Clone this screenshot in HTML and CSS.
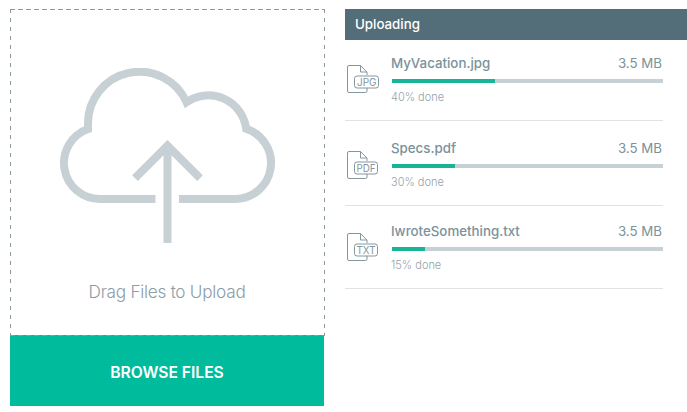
FILE: index.html
```
<!DOCTYPE html>
<html lang="en">
<head>
<meta charset="utf-8">
<title>Upload files</title>
<link rel="stylesheet" href="styles.css">
</head>
<body>
<main class="uploader">
  <section class="picker">
    <div class="dropzone">
      <svg class="frame" width="315" height="327" viewBox="0 0 315 327" fill="none" stroke="#8b999f">
        <path d="M0 .5H315" stroke-dasharray="5 3"/>
        <path d="M.5 0V327M314.5 0V327" stroke-dasharray="4 5"/>
      </svg>
      <svg class="cloud" width="215" height="175" viewBox="60 68 215 175" fill="none" stroke="#c7d0d4" stroke-width="8">
        <path d="M155.5 199H100A36 36 0 0 1 88 129.060V123.5A51.5 51.5 0 0 1 186.5 102.2A38.2 38.2 0 0 1 246.2 128.780A36 36 0 0 1 235 199H179"/>
        <path d="M135 178.2L167.5 145.7L200 178.2M167.500 145V243"/>
      </svg>
      <p class="hint">Drag Files to Upload</p>
    </div>
    <button class="browse" type="button">BROWSE FILES</button>
  </section>
  <section class="queue">
    <h2 class="heading">Uploading</h2>
    <article class="item first">
      <svg class="file" width="34" height="30" viewBox="0 0 34 30">
        <path d="M22 11V8L15.500 1.500H4Q2.500 1.500 2.500 3V27Q2.500 28.500 4 28.500H20.500Q22 28.500 22 27V24M15.500 1.500V8H22"/>
        <rect x="9.500" y="12" width="24" height="12" rx="2.500"/>
        <text x="12" y="21.700" textLength="19.500" lengthAdjust="spacingAndGlyphs">JPG</text>
      </svg>
      <div class="details">
        <div class="line"><span class="name">MyVacation.jpg</span><span class="size">3.5 MB</span></div>
        <div class="track"><div class="bar" style="width:38%"></div></div>
        <div class="status">40% done</div>
      </div>
    </article>
    <article class="item second">
      <svg class="file" width="34" height="30" viewBox="0 0 34 30">
        <path d="M22 11V8L15.500 1.500H4Q2.500 1.500 2.500 3V27Q2.500 28.500 4 28.500H20.500Q22 28.500 22 27V24M15.500 1.500V8H22"/>
        <rect x="9.500" y="12" width="23" height="12" rx="2.500"/>
        <text x="11.500" y="21.700" textLength="19" lengthAdjust="spacingAndGlyphs">PDF</text>
      </svg>
      <div class="details">
        <div class="line"><span class="name">Specs.pdf</span><span class="size">3.5 MB</span></div>
        <div class="track"><div class="bar" style="width:23.25%"></div></div>
        <div class="status">30% done</div>
      </div>
    </article>
    <article class="item third">
      <svg class="file" width="34" height="30" viewBox="0 0 34 30">
        <path d="M22 11V8L15.500 1.500H4Q2.500 1.500 2.500 3V27Q2.500 28.500 4 28.500H20.500Q22 28.500 22 27V24M15.500 1.500V8H22"/>
        <rect x="9.500" y="12" width="23" height="12" rx="2.500"/>
        <text x="11.500" y="21.700" textLength="19" lengthAdjust="spacingAndGlyphs">TXT</text>
      </svg>
      <div class="details">
        <div class="line"><span class="name">IwroteSomething.txt</span><span class="size">3.5 MB</span></div>
        <div class="track"><div class="bar" style="width:12.2%"></div></div>
        <div class="status">15% done</div>
      </div>
    </article>
  </section>
</main>
</body>
</html>
```
FILE: styles.css
```
* { box-sizing: border-box; }
body {
  margin: 0;
  background: #fff;
  color: #7b929b;
  font-family: Inter, "Liberation Sans", sans-serif;
}
.uploader {
  display: grid;
  grid-template-columns: 315px 342px;
  column-gap: 20px;
  height: 412px;
  padding: 9px 0 0 10px;
  overflow: hidden;
}
.dropzone {
  position: relative;
  height: 326px;
  padding-top: 59px;
}
.frame { position: absolute; inset: 0; }
.cloud { display: block; margin-left: 50px; }
.hint {
  margin: 37px 1px 0 0;
  font-size: 17.2px;
  font-weight: 350;
  line-height: 24px;
  letter-spacing: -0.26px;
  text-align: center;
  color: #8b9da6;
}
.browse {
  display: block;
  width: 314px;
  height: 71px;
  padding: 4px 0 0;
  border: 0;
  background: repeating-linear-gradient(90deg, #8b999f 0 5px, #00bb9c 5px 8px) 0 0 / 100% 1px no-repeat #00bb9c;
  color: #fff;
  font: 600 15.7px Inter, "Liberation Sans", sans-serif;
  letter-spacing: -0.05px;
}
.heading {
  height: 31px;
  margin: 0;
  padding-left: 10px;
  background: #536e79;
  color: #fff;
  font-size: 13.3px;
  font-weight: 500;
  line-height: 31px;
}
.item {
  display: flex;
  gap: 12px;
  width: 318px;
  border-bottom: 1px solid #dfe3e5;
}
.first { height: 81px; padding-top: 14px; }
.second { height: 85px; padding-top: 18px; }
.third { height: 83px; padding-top: 16px; }
.file {
  flex: none;
  margin-top: 10px;
  fill: none;
  stroke: #84969e;
  stroke-width: 1;
}
.second .file { margin-top: 11px; }
.file text {
  fill: #84969e;
  stroke: none;
  font-size: 10.5px;
}
.details { width: 272px; }
.line {
  display: flex;
  justify-content: space-between;
  height: 20px;
  padding-right: 1px;
  margin-top: -1px;
  font-size: 13.3px;
  line-height: 20px;
}
.name { font-weight: 500; }
.track { height: 4px; margin: 6px 0 0 1px; background: #c7d0d4; }
.bar { height: 4px; background: #17b498; }
.status {
  margin-top: 6px;
  font-size: 11px;
  font-weight: 300;
  line-height: 16px;
  color: #94a3aa;
}
```
